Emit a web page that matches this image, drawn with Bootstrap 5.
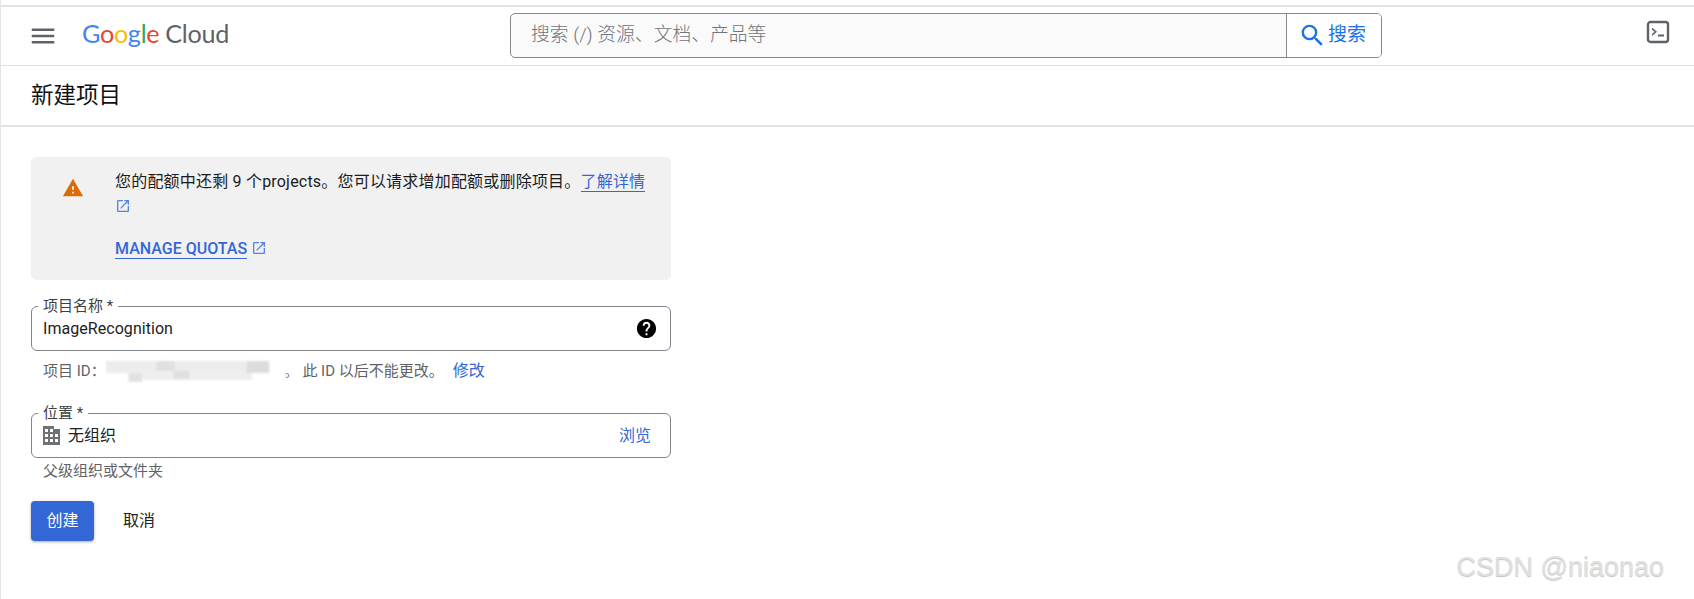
<!DOCTYPE html>
<html lang="zh-CN">
<head>
<meta charset="utf-8">
<title>新建项目</title>
<link href="https://cdn.jsdelivr.net/npm/bootstrap@5.3.0/dist/css/bootstrap.min.css" rel="stylesheet">
<style>
html,body{height:100%;}
body{font-family:Roboto,"Noto Sans CJK SC",sans-serif;color:#202124;background:#fff;font-size:14px;border-left:1px solid #e4e4e4;overflow:hidden;position:relative;}
.top-strip{height:7px;border-bottom:2px solid #e3e3e3;margin-left:-1px;}
.gc-head{height:59px;border-bottom:1px solid #e0e0e0;padding-left:31px;padding-right:24px;margin-left:-1px;}
.burger{width:30px;height:30px;fill:#5f6368;margin-left:-3px;flex:none;}
.logo{margin-left:24px;width:150px;font-family:Lato,sans-serif;font-size:25.2px;letter-spacing:-.3px;line-height:1;white-space:nowrap;margin-bottom:4px;}
.logo .b{color:#4285f4}.logo .r{color:#ea4335}.logo .y{color:#fbbc05}.logo .g{color:#34a853}.logo .c{color:#5f6368;margin-left:6px}
.searchbar{margin-left:278px;width:872px;height:45px;border:1px solid #85888c;border-radius:5px;background:#fafafa;overflow:hidden;margin-bottom:2px;}
.search-input{flex:1;padding-left:20px;font-size:18.8px;color:#70757a;font-weight:300;white-space:nowrap;}
.search-btn{width:95px;height:100%;background:#fff;border-left:1px solid #85888c;color:#1a73e8;font-size:19px;padding-left:11px;gap:1px;}
.search-btn svg{width:29px;height:29px;fill:#1a73e8;}
.term{margin-left:auto;width:24px;height:24px;margin-bottom:9px;}
.title-bar{height:61px;border-bottom:2px solid #e3e3e3;padding-left:31px;font-size:22.5px;color:#111;margin-left:-1px;}
.form-wrap{width:640px;margin-left:30px;}
.quota{margin-top:30px;height:123px;background:#f1f1f1;border-radius:5px;}
.quota-ico{width:84px;flex:none;padding-top:20px;text-align:center;}
.quota-ico svg{width:22px;height:22px;fill:#d96c06;}
.quota-txt{padding-top:12px;width:540px;font-size:16px;line-height:25px;color:#1b1b1b;}
.quota-main{letter-spacing:.2px;}
.quota-link{color:#3367d6;text-decoration:none;border-bottom:1px solid #3367d6;white-space:nowrap;}
.ext{width:16px;height:16px;fill:#3367d6;opacity:.8;vertical-align:-2px;}
.quota-act{margin-top:18px;font-size:16px;font-weight:500;color:#3367d6;line-height:24px;}
.outfield{position:relative;height:45px;border:1px solid #80868b;border-radius:6px;padding:0 19px 0 11px;}
.f-one{margin-top:26px;}
.f-two{margin-top:28px;}
.out-label{position:absolute;top:-10px;left:6px;background:#fff;padding:0 5px;font-size:15px;line-height:18px;color:#3c4043;}
.out-val{font-size:16px;color:#222;letter-spacing:.05px;}
.help-ico{width:23px;height:23px;fill:#000;margin-left:auto;margin-right:-7px;}
.bldg{width:17px;height:19px;fill:#6f7275;margin-right:8px;flex:none;}
.hint{padding-left:12px;font-size:15px;color:#5f6368;line-height:18px;margin-top:8px;white-space:nowrap;}
.hint.second{margin-top:4px;}
.change{color:#3367d6;font-size:16px;margin-left:9px;text-decoration:none;}
.browse{color:#3367d6;margin-left:auto;font-size:16px;text-decoration:none;}
.smudge{display:inline-block;width:180px;height:26px;vertical-align:middle;margin:0 -2px 0 0;filter:blur(1.2px);}
.btn-row{margin-top:21px;}
.go-btn{background:#3367d6;color:#fff;border:0;border-radius:4px;width:63px;height:40px;font-size:16px;box-shadow:0 1px 3px rgba(60,64,67,.45);padding:0;}
.go-btn:hover{background:#3367d6;color:#fff;}
.no-btn{background:none;border:0;color:#222;font-size:16px;margin-left:29px;padding:0;}
.mark-wm{position:absolute;right:30px;bottom:16px;font-family:"Liberation Sans",sans-serif;font-size:27px;line-height:32px;color:#e0e0e0;text-shadow:0 1px 1px #c4c4c4;}
</style>
</head>
<body>
<div class="top-strip"></div>
<header class="gc-head d-flex align-items-center">
  <svg class="burger" viewBox="0 0 24 24"><path d="M3 18h18v-2H3v2zm0-5h18v-2H3v2zm0-7v2h18V6H3z"/></svg>
  <div class="logo"><span class="b">G</span><span class="r">o</span><span class="y">o</span><span class="b">g</span><span class="g">l</span><span class="r">e</span><span class="c">Cloud</span></div>
  <div class="searchbar d-flex align-items-center">
    <div class="search-input">搜索 (/) 资源、文档、产品等</div>
    <div class="search-btn d-flex align-items-center">
      <svg viewBox="0 0 24 24"><path d="M15.5 14h-.79l-.28-.27A6.471 6.471 0 0 0 16 9.5 6.5 6.5 0 1 0 9.5 16c1.61 0 3.09-.59 4.23-1.57l.27.28v.79l5 4.99L20.49 19l-4.99-5zm-6 0C7.01 14 5 11.99 5 9.5S7.01 5 9.5 5 14 7.01 14 9.5 11.99 14 9.5 14z"/></svg>
      <span>搜索</span>
    </div>
  </div>
  <svg class="term" viewBox="0 0 24 24"><rect x="2" y="2" width="20" height="20" rx="2.500" fill="none" stroke="#5f6368" stroke-width="2.400"/><path d="M6 7.500l5 4.300-5 4.300v-2.200l2.600-2.100-2.600-2.100z" fill="#5f6368"/><rect x="12" y="14.500" width="6" height="2" fill="#5f6368"/></svg>
</header>
<div class="title-bar d-flex align-items-center">新建项目</div>
<main class="form-wrap">
  <div class="quota d-flex">
    <div class="quota-ico"><svg viewBox="0 0 24 24"><path d="M1 21h22L12 2 1 21zm12-3h-2v-2h2v2zm0-4h-2v-4h2v4z"/></svg></div>
    <div class="quota-txt">
      <div class="quota-main">您的配额中还剩 9 个projects。您可以请求增加配额或删除项目。<a class="quota-link" href="#">了解详情</a> <svg class="ext" viewBox="0 0 24 24"><path d="M19 19H5V5h7V3H5a2 2 0 0 0-2 2v14a2 2 0 0 0 2 2h14c1.100 0 2-.9 2-2v-7h-2v7zM14 3v2h3.590l-9.830 9.830 1.410 1.410L19 6.410V10h2V3h-7z"/></svg></div>
      <div class="quota-act"><a class="quota-link" href="#">MANAGE QUOTAS</a> <svg class="ext" viewBox="0 0 24 24"><path d="M19 19H5V5h7V3H5a2 2 0 0 0-2 2v14a2 2 0 0 0 2 2h14c1.100 0 2-.9 2-2v-7h-2v7zM14 3v2h3.590l-9.830 9.830 1.410 1.410L19 6.410V10h2V3h-7z"/></svg></div>
    </div>
  </div>

  <div class="outfield f-one d-flex align-items-center">
    <span class="out-label">项目名称 *</span>
    <span class="out-val">ImageRecognition</span>
    <svg class="help-ico" viewBox="0 0 24 24"><path d="M12 2C6.480 2 2 6.480 2 12s4.480 10 10 10 10-4.480 10-10S17.520 2 12 2zm1 17h-2v-2h2v2zm2.070-7.750l-.9.920C13.450 12.900 13 13.500 13 15h-2v-.5c0-1.100.45-2.100 1.170-2.830l1.240-1.260c.37-.36.59-.86.59-1.410 0-1.100-.9-2-2-2s-2 .9-2 2H8c0-2.210 1.790-4 4-4s4 1.790 4 4c0 .88-.36 1.680-.93 2.250z"/></svg>
  </div>
  <div class="hint">项目 ID：<svg class="smudge" viewBox="0 0 160 26" preserveAspectRatio="none"><rect width="160" height="26" fill="#fff"/><rect x="0" y="2" width="145" height="12" fill="#ececec"/><rect x="20" y="12" width="110" height="9" fill="#efefef"/><rect x="125" y="2" width="20" height="12" fill="#dcdcdc"/><rect x="60" y="12" width="14" height="8" fill="#e0e0e0"/><rect x="20" y="14" width="12" height="9" fill="#e2e2e2"/><rect x="45" y="2" width="16" height="10" fill="#e0e0e0"/></svg>。 此 ID 以后不能更改。<a class="change" href="#">修改</a></div>

  <div class="outfield f-two d-flex align-items-center">
    <span class="out-label">位置 *</span>
    <svg class="bldg" viewBox="0 0 17 19"><path fill-rule="evenodd" d="M0 0h11v3h6v16H0zM2 3v3h3V3zm5 0v3h3V3zM2 8v3h3V8zm5 0v3h3V8zm5 0v3h3V8zM2 13v3h3v-3zm5 0v3h3v-3zm5 0v3h3v-3z"/></svg>
    <span class="out-val">无组织</span>
    <a class="browse" href="#">浏览</a>
  </div>
  <div class="hint second">父级组织或文件夹</div>

  <div class="btn-row d-flex align-items-center">
    <button type="button" class="btn go-btn">创建</button>
    <button type="button" class="btn no-btn">取消</button>
  </div>
</main>
<div class="mark-wm">CSDN @niaonao</div>
<script src="https://cdn.jsdelivr.net/npm/bootstrap@5.3.0/dist/js/bootstrap.bundle.min.js"></script>
</body>
</html>
